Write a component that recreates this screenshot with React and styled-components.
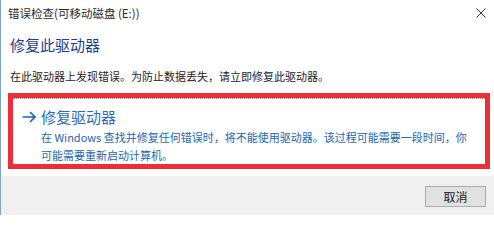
import React from "react";
import styled, { createGlobalStyle } from "styled-components";

const Global = createGlobalStyle`
  html, body { margin: 0; padding: 0; background: #ffffff; }
  body { font-family: "Noto Sans CJK SC", "Noto Sans", sans-serif; }
  #root { width: 494px; height: 215px; }
`;

const Window = styled.div`
  box-sizing: border-box;
  width: 494px;
  height: 215px;
  display: flex;
  flex-direction: column;
  background: #ffffff;
  border-left: 1px solid #7ea3c4;
  overflow: hidden;
`;

const TitleBar = styled.div`
  height: 25px;
  display: flex;
  align-items: center;
  justify-content: space-between;
  padding: 0 7px 0 7px;
  font-size: 11.5px;
  color: #2a2a2a;
`;

const CloseButton = styled.div`
  width: 12px;
  height: 12px;
  display: flex;
  align-items: center;
  justify-content: center;
`;

const Content = styled.div`
  padding: 0 0 0 7px;
  display: flex;
  flex-direction: column;
`;

const Heading = styled.div`
  margin: 10px 0 0 2px;
  font-size: 15px;
  line-height: 20px;
  color: #1d3d8f;
`;

const Body = styled.div`
  margin: 13px 0 0 2px;
  font-size: 11px;
  line-height: 16px;
  color: #1e1e1e;
`;

const Highlight = styled.div`
  margin-top: 9px;
  width: 482px;
  box-sizing: border-box;
  border: 5px solid #ec2f36;
  height: 76px;
`;

const CommandLink = styled.div`
  height: 100%;
  box-sizing: border-box;
  border-top: 1px dotted #8a8a8a;
  padding: 8px 0 0 9px;
  display: grid;
  grid-template-columns: 14px 1fr;
  column-gap: 5px;
`;

const ArrowBox = styled.div`
  height: 20px;
  display: flex;
  align-items: center;
`;

const LinkTitle = styled.div`
  font-size: 15px;
  line-height: 20px;
  color: #2c6cb8;
`;

const LinkNote = styled.div`
  grid-column: 2;
  font-size: 11px;
  line-height: 18px;
  color: #1c66b0;
  white-space: nowrap;
`;

const Footer = styled.div`
  margin-top: auto;
  height: 39px;
  background: #f0f0f0;
  display: flex;
  justify-content: flex-end;
  align-items: flex-start;
  padding: 10px 8px 0 0;
  box-sizing: border-box;
`;

const Button = styled.div`
  width: 61px;
  height: 21px;
  box-sizing: border-box;
  background: #e1e1e1;
  border: 1px solid #adadad;
  display: flex;
  align-items: center;
  justify-content: center;
  font-size: 12px;
  color: #1a1a1a;
`;

export default function App() {
  return (
    <>
      <Global />
      <Window>
        <TitleBar>
          <span>错误检查(可移动磁盘 (E:))</span>
          <CloseButton>
            <svg width="10" height="10" viewBox="0 0 10 10">
              <path d="M0.5 0.5 L9.5 9.5 M9.5 0.5 L0.5 9.5" stroke="#333" strokeWidth="1" fill="none" />
            </svg>
          </CloseButton>
        </TitleBar>
        <Content>
          <Heading>修复此驱动器</Heading>
          <Body>在此驱动器上发现错误。为防止数据丢失，请立即修复此驱动器。</Body>
          <Highlight>
            <CommandLink>
              <ArrowBox>
                <svg width="14" height="12" viewBox="0 0 14 12">
                  <path d="M0.5 6 H13 M8 1 L13 6 L8 11" stroke="#1f66b3" strokeWidth="1.6" fill="none" />
                </svg>
              </ArrowBox>
              <LinkTitle>修复驱动器</LinkTitle>
              <LinkNote>
                在 Windows 查找并修复任何错误时，将不能使用驱动器。该过程可能需要一段时间，你
                <br />
                可能需要重新启动计算机。
              </LinkNote>
            </CommandLink>
          </Highlight>
        </Content>
        <Footer>
          <Button>取消</Button>
        </Footer>
      </Window>
    </>
  );
}
